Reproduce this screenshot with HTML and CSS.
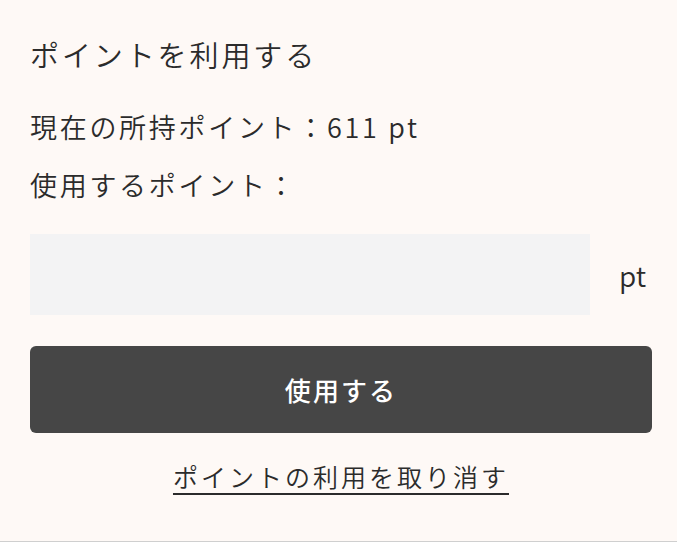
FILE: index.html
```html
<!DOCTYPE html>
<html lang="ja">
<head>
<meta charset="utf-8">
<link rel="stylesheet" href="styles.css">
</head>
<body>
<div class="panel">
  <h2 class="title">ポイントを利用する</h2>
  <p class="line current">現在の所持ポイント：611 pt</p>
  <p class="line use">使用するポイント：</p>
  <div class="input-row">
    <input class="point-input" type="text" aria-label="使用するポイント">
    <span class="unit">pt</span>
  </div>
  <button class="apply" type="button">使用する</button>
  <div class="cancel-wrap"><a class="cancel" href="#">ポイントの利用を取り消す</a></div>
</div>
</body>
</html>
```
FILE: styles.css
```css
html, body {
  margin: 0;
  padding: 0;
  background: #fef9f6;
}
body {
  font-family: "Noto Sans CJK JP", "Noto Sans", sans-serif;
  font-weight: 350;
  color: #2b2b2b;
}
.panel {
  box-sizing: border-box;
  height: 542px;
  padding: 34px 25px 0 30px;
  border-bottom: 1px solid #cfcfcf;
  display: flex;
  flex-direction: column;
}
.title {
  margin: 0;
  font-size: 29px;
  font-weight: 350;
  line-height: 40px;
  letter-spacing: 0.1em;
}
.line {
  margin: 0;
  font-size: 27px;
  line-height: 40px;
  letter-spacing: 0.1em;
}
.current { margin-top: 33px; }
.use { margin-top: 18px; }
.input-row {
  margin-top: 29px;
  display: flex;
  align-items: center;
}
.point-input {
  width: 560px;
  height: 81px;
  box-sizing: border-box;
  border: none;
  background: #f3f3f4;
  margin: 0;
  padding: 0 16px;
  font: inherit;
  font-size: 27px;
}
.unit {
  margin-left: 29px;
  font-size: 28px;
  line-height: 40px;
}
.apply {
  margin-top: 31px;
  height: 87px;
  width: 100%;
  border: none;
  border-radius: 6px;
  background: #464646;
  color: #fff;
  font-family: inherit;
  font-size: 26px;
  font-weight: 500;
  letter-spacing: 0.08em;
  padding: 0;
}
.cancel-wrap {
  margin-top: 23px;
  text-align: center;
  line-height: 40px;
}
.cancel {
  color: #2b2b2b;
  font-size: 25px;
  letter-spacing: 0.12em;
  text-decoration: underline;
  text-underline-offset: 6px;
  text-decoration-thickness: 2px;
}
```
